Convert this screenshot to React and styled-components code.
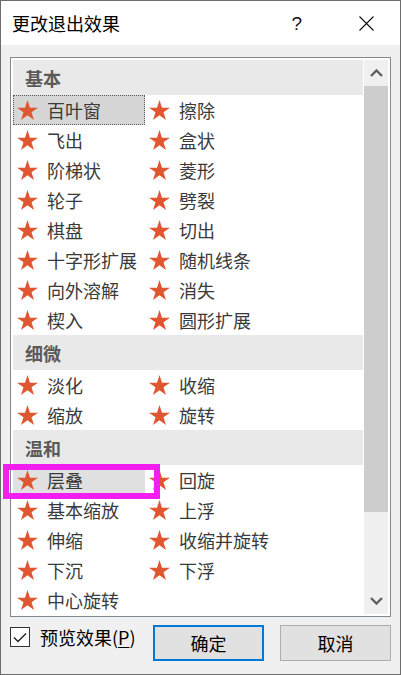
import React from 'react'
import styled, { createGlobalStyle } from 'styled-components'

const GlobalStyle = createGlobalStyle`
  body {
    margin: 0;
    background: #ffffff;
  }
  * {
    box-sizing: border-box;
  }
`

// koko ikkuna
const Window = styled.div`
  position: relative;
  width: 401px;
  height: 675px;
  border: 1px solid #6d6d6d;
  display: flex;
  flex-direction: column;
  font-family: 'Noto Sans CJK SC', 'Noto Sans', sans-serif;
  background: #f0f0f0;
`

const TitleBar = styled.div`
  height: 44px;
  background: #ffffff;
  display: flex;
  align-items: center;
  padding-left: 11px;
`

const Title = styled.div`
  flex: 1;
  font-size: 18px;
  line-height: 1;
  color: #000000;
`

const Help = styled.div`
  font-family: 'Liberation Sans', sans-serif;
  font-size: 19px;
  line-height: 1;
  color: #111111;
  margin-right: 57px;
`

const Close = styled.svg`
  margin-right: 26px;
  margin-top: 1px;
`

const Body = styled.div`
  flex: 1;
  padding: 12px 9px 0 9px;
`

const ListBox = styled.div`
  height: 560px;
  border: 1px solid #828790;
  background: #ffffff;
  padding: 2px;
  display: flex;
`

const Content = styled.div`
  flex: 1;
  overflow: hidden;
  margin-right: 1px;
`

const GroupHead = styled.div`
  height: 35px;
  background: #e9e9e9;
  padding-left: 12px;
  display: flex;
  align-items: center;
  font-size: 18px;
  font-weight: 700;
  color: #5a5a5a;
  line-height: 1;
`

const Grid = styled.div`
  display: grid;
  grid-template-columns: 132px 132px;
  grid-auto-rows: 30px;
`

const Cell = styled.div`
  display: flex;
  align-items: center;
  padding-left: 3px;
  border: 1px ${p => (p.$selected ? 'dotted #5a5a5a' : 'solid transparent')};
  background: ${p => (p.$selected ? '#d6d6d6' : p.$hover ? '#e0e0e0' : 'transparent')};
`

const Label = styled.span`
  margin-left: 9px;
  font-size: 18px;
  line-height: 1;
  color: #3a3a3a;
  white-space: nowrap;
`

const ScrollBar = styled.div`
  width: 24px;
  background: #f0f0f0;
  display: flex;
  flex-direction: column;
`

const ArrowBox = styled.div`
  height: 26px;
  display: flex;
  align-items: center;
  justify-content: center;
`

const Thumb = styled.div`
  height: 426px;
  background: #cdcdcd;
`

const Footer = styled.div`
  display: flex;
  align-items: flex-start;
  padding-top: 8px;
`

const CheckBox = styled.div`
  width: 20px;
  height: 20px;
  margin-top: 2px;
  border: 1px solid #333333;
  background: #ffffff;
  display: flex;
  align-items: center;
  justify-content: center;
`

const CheckLabel = styled.div`
  margin-left: 10px;
  margin-top: 3px;
  font-size: 18px;
  line-height: 1;
  color: #000000;

  u {
    text-underline-offset: 2px;
  }
`

const Button = styled.div`
  width: 111px;
  height: 36px;
  margin-left: ${p => (p.$first ? 'auto' : '16px')};
  background: #e1e1e1;
  border: ${p => (p.$primary ? '2px solid #0078d7' : '1px solid #adadad')};
  display: flex;
  align-items: center;
  justify-content: center;
  font-size: 18px;
  line-height: 1;
  color: #000000;
`

// tarkoituksella piirretty merkintä kuvan päällä
const Marker = styled.div`
  position: absolute;
  left: 2px;
  top: 463px;
  width: 157px;
  height: 35px;
  border: 6px solid #f21df0;
  pointer-events: none;
`

const Star = () => (
  <svg width="21" height="20" viewBox="0 0 21 20" style={{ flex: 'none' }}>
    <polygon
      fill="#df5630"
      points="10.5,0 12.98,7.63 21,7.63 14.51,12.34 16.99,19.97 10.5,15.26 4.01,19.97 6.49,12.34 0,7.63 8.02,7.63"
    />
  </svg>
)

const Chevron = ({ up }) => (
  <svg width="13" height="8" viewBox="0 0 13 8">
    <polyline
      points={up ? '1,7 6.5,1.5 12,7' : '1,1 6.5,6.5 12,1'}
      fill="none"
      stroke="#606060"
      strokeWidth="2.4"
    />
  </svg>
)

const groups = [
  {
    name: '基本',
    items: ['百叶窗', '擦除', '飞出', '盒状', '阶梯状', '菱形', '轮子', '劈裂', '棋盘', '切出', '十字形扩展', '随机线条', '向外溶解', '消失', '楔入', '圆形扩展'],
  },
  { name: '细微', items: ['淡化', '收缩', '缩放', '旋转'] },
  {
    name: '温和',
    items: ['层叠', '回旋', '基本缩放', '上浮', '伸缩', '收缩并旋转', '下沉', '下浮', '中心旋转'],
  },
]

const App = () => {
  return (
    <Window>
      <GlobalStyle />
      <TitleBar>
        <Title>更改退出效果</Title>
        <Help>?</Help>
        <Close width="15" height="15" viewBox="0 0 15 15">
          <path d="M0.5,0.5 L14.5,14.5 M14.5,0.5 L0.5,14.5" stroke="#111" strokeWidth="1.1" />
        </Close>
      </TitleBar>
      <Body>
        <ListBox>
          <Content>
            {groups.map(g => (
              <div key={g.name}>
                <GroupHead>{g.name}</GroupHead>
                <Grid>
                  {g.items.map(it => (
                    <Cell key={it} $selected={it === '百叶窗'} $hover={it === '层叠'}>
                      <Star />
                      <Label>{it}</Label>
                    </Cell>
                  ))}
                </Grid>
              </div>
            ))}
          </Content>
          <ScrollBar>
            <ArrowBox>
              <Chevron up />
            </ArrowBox>
            <Thumb />
            <div style={{ flex: 1 }} />
            <ArrowBox>
              <Chevron />
            </ArrowBox>
          </ScrollBar>
        </ListBox>
        <Footer>
          <CheckBox>
            <svg width="14" height="11" viewBox="0 0 14 11">
              <polyline points="1,5.5 5,9.5 13,1.5" fill="none" stroke="#222" strokeWidth="1.4" />
            </svg>
          </CheckBox>
          <CheckLabel>
            预览效果(<u>P</u>)
          </CheckLabel>
          <Button $first $primary>确定</Button>
          <Button>取消</Button>
        </Footer>
      </Body>
      <Marker />
    </Window>
  )
}

export default App
